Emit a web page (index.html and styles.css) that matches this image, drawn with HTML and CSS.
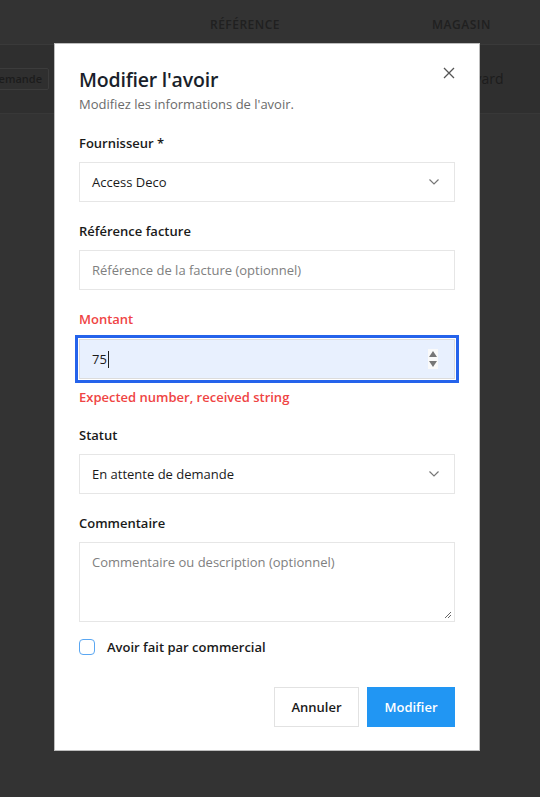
FILE: index.html
```html
<!DOCTYPE html>
<html lang="fr">
<head>
<meta charset="utf-8">
<title>Modifier l'avoir</title>
<link rel="stylesheet" href="styles.css">
</head>
<body>
<div class="page">
  <div class="table-head">
    <span class="th th-ref">RÉFÉRENCE</span>
    <span class="th th-mag">MAGASIN</span>
  </div>
  <div class="table-row">
    <span class="badge">En attente de demande</span>
    <span class="cell-right">Boulevard</span>
  </div>
</div>

<div class="overlay">
  <div class="modal">
    <button class="close" aria-label="Fermer">
      <svg width="12" height="12" viewBox="0 0 12 12"><path d="M1 1L11 11M11 1L1 11" stroke="#555" stroke-width="1.3" fill="none"/></svg>
    </button>
    <h2 class="title">Modifier l'avoir</h2>
    <p class="subtitle">Modifiez les informations de l'avoir.</p>

    <div class="field">
      <label class="label">Fournisseur *</label>
      <div class="control select">
        <span class="value">Access Deco</span>
        <svg class="chev" width="12" height="8" viewBox="0 0 12 8"><path d="M1.5 1.5L6 6L10.5 1.5" stroke="#777" stroke-width="1.2" fill="none"/></svg>
      </div>
    </div>

    <div class="field">
      <label class="label">Référence facture</label>
      <div class="control"><span class="placeholder">Référence de la facture (optionnel)</span></div>
    </div>

    <div class="field">
      <label class="label label-error">Montant</label>
      <div class="control focused">
        <span class="value">75</span><span class="caret"></span>
        <span class="spin">
          <svg width="10" height="20" viewBox="0 0 10 20"><path d="M5 2L9 8H1Z" fill="#777"/><path d="M1 12H9L5 18Z" fill="#777"/></svg>
        </span>
      </div>
      <p class="error">Expected number, received string</p>
    </div>

    <div class="field">
      <label class="label">Statut</label>
      <div class="control select">
        <span class="value">En attente de demande</span>
        <svg class="chev" width="12" height="8" viewBox="0 0 12 8"><path d="M1.5 1.5L6 6L10.5 1.5" stroke="#777" stroke-width="1.2" fill="none"/></svg>
      </div>
    </div>

    <div class="field">
      <label class="label">Commentaire</label>
      <div class="control textarea">
        <span class="placeholder">Commentaire ou description (optionnel)</span>
        <svg class="grip" width="8" height="8" viewBox="0 0 8 8"><path d="M7 1L1 7M7 4L4 7" stroke="#666" stroke-width="1" fill="none"/></svg>
      </div>
    </div>

    <label class="check">
      <span class="box"></span>
      <span class="check-label">Avoir fait par commercial</span>
    </label>

    <div class="actions">
      <button class="btn btn-cancel">Annuler</button>
      <button class="btn btn-primary">Modifier</button>
    </div>
  </div>
</div>
</body>
</html>
```

FILE: styles.css
```css
* { box-sizing: border-box; }
html, body { margin: 0; padding: 0; }
body {
  width: 540px;
  height: 797px;
  overflow: hidden;
  font-family: "Open Sans", "Noto Sans", sans-serif;
  background: #333333;
  position: relative;
}
.page {
  color: #1e1e1e;
}
.table-head {
  height: 45px;
  border-bottom: 1px solid #3a3a3a;
  position: relative;
  font-size: 12px;
  font-weight: 600;
  letter-spacing: 0.5px;
  color: #202020;
}
.th { position: absolute; top: 16px; }
.th-ref { left: 210px; }
.th-mag { left: 432px; }
.table-row {
  height: 69px;
  background: #2f2f2f;
  border-bottom: 1px solid #383838;
  position: relative;
  font-size: 13px;
  color: #1c1c1c;
}
.badge {
  position: absolute;
  right: 491px;
  top: 23px;
  height: 22px;
  padding: 0 6px;
  border: 1px solid #3c3c3c;
  border-radius: 2px;
  font-size: 11px;
  font-weight: 600;
  line-height: 20px;
  white-space: nowrap;
}
.cell-right { position: absolute; left: 437px; top: 24px; font-size: 14px; }

.overlay {
  position: absolute;
  inset: 0;
}
.modal {
  position: absolute;
  left: 54px;
  top: 43px;
  width: 426px;
  height: 708px;
  background: #fff;
  border: 1px solid #bdbdbd;
  padding: 22px 24px 24px;
  display: flex;
  flex-direction: column;
}
.close {
  position: absolute;
  right: 24px;
  top: 23px;
  width: 12px;
  height: 12px;
  padding: 0;
  border: 0;
  background: none;
  display: flex;
}
.title {
  margin: 0;
  font-size: 19.5px;
  font-weight: 600;
  line-height: 28px;
  color: #1a1f2b;
  letter-spacing: -0.2px;
}
.subtitle {
  margin: 1px 0 0;
  font-size: 13px;
  line-height: 18px;
  color: #6b6b6b;
}
.field {
  display: flex;
  flex-direction: column;
  margin-top: 21px;
}
.field + .field { margin-top: 20px; }
.label {
  font-size: 13px;
  font-weight: 600;
  line-height: 18px;
  color: #1a1a1a;
  margin-bottom: 10px;
}
.label-error { color: #ef4444; margin-bottom: 11px; }
.control {
  height: 40px;
  border: 1px solid #e6e6e6;
  background: #fff;
  display: flex;
  align-items: center;
  padding: 0 12px;
  font-size: 13px;
  color: #1a1a1a;
  position: relative;
}
.select { justify-content: space-between; padding-right: 14px; }
.placeholder { color: #808080; }
.focused {
  background: #e8f0fe;
  border-color: #dcdcdc;
  box-shadow: 0 0 0 1px #fff, 0 0 0 4px #2563eb;
}
.caret {
  width: 1px;
  height: 17px;
  background: #222;
  margin-left: 1px;
}
.spin {
  margin-left: auto;
  margin-right: 4px;
  width: 10px;
  height: 20px;
  background: #fafafa;
  display: flex;
}
.error {
  margin: 9px 0 0;
  font-size: 13px;
  font-weight: 600;
  line-height: 18px;
  color: #ef4444;
}
.textarea {
  height: 80px;
  align-items: flex-start;
  padding-top: 10px;
}
.grip { position: absolute; right: 2px; bottom: 2px; }
.check {
  display: flex;
  align-items: center;
  margin-top: 16px;
  gap: 12px;
}
.box {
  width: 16px;
  height: 16px;
  border: 1.5px solid #5aa7f2;
  border-radius: 4px;
  background: #fff;
}
.check-label {
  font-size: 13px;
  font-weight: 600;
  color: #1a1a1a;
  line-height: 18px;
}
.actions {
  margin-top: 31px;
  display: flex;
  justify-content: flex-end;
  gap: 8px;
}
.btn {
  height: 40px;
  font-family: inherit;
  font-size: 13px;
  font-weight: 600;
  border-radius: 0;
  padding: 0 16px;
}
.btn-cancel {
  width: 85px;
  background: #fff;
  border: 1px solid #e2e2e2;
  color: #1a1a1a;
}
.btn-primary {
  width: 88px;
  background: #2196f3;
  border: 0;
  color: #fff;
}
```
